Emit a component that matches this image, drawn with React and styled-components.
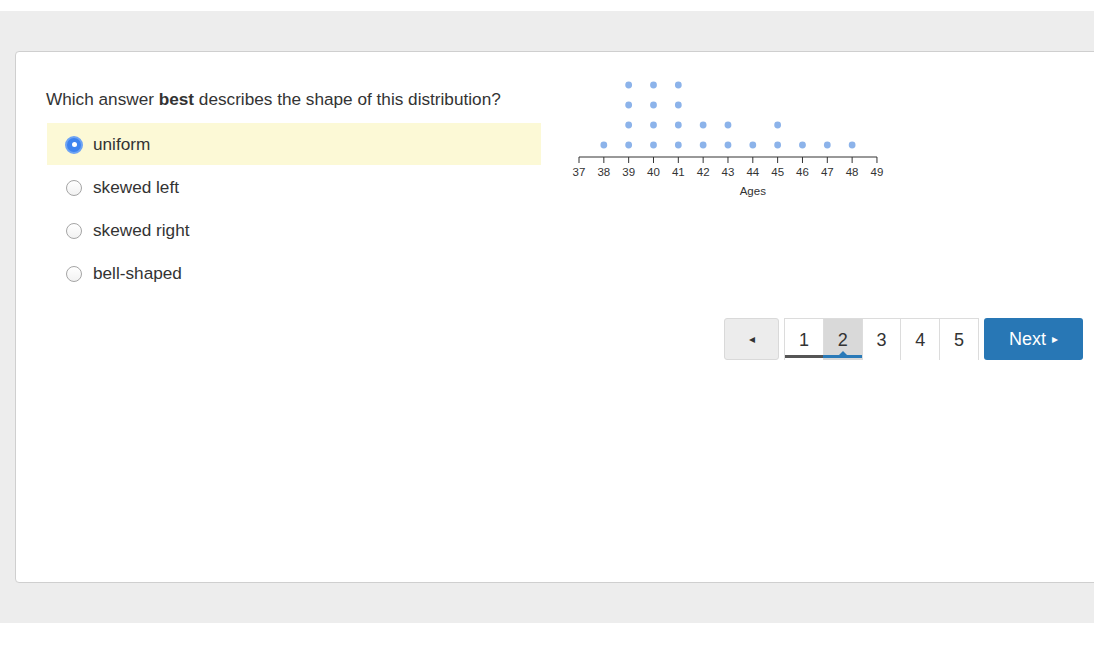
import React from 'react';
import styled, { createGlobalStyle } from 'styled-components';

const GlobalStyle = createGlobalStyle`
  body {
    margin: 0;
    background: #fff;
    font-family: "Liberation Sans", Arial, sans-serif;
    color: #333;
  }
`;

const options = ['uniform', 'skewed left', 'skewed right', 'bell-shaped'];
const counts = { 38: 1, 39: 4, 40: 4, 41: 4, 42: 2, 43: 2, 44: 1, 45: 2, 46: 1, 47: 1, 48: 1 };
const ages = [37, 38, 39, 40, 41, 42, 43, 44, 45, 46, 47, 48, 49];

const X0 = 14;
const STEP = 24.83;
const AXIS_Y = 87;

const DotPlot = () => (
  <Chart width="330" height="140" viewBox="0 0 330 140">
    {Object.entries(counts).map(([age, n]) =>
      Array.from({ length: n }).map((_, i) => (
        <circle
          key={`${age}-${i}`}
          cx={X0 + (age - 37) * STEP}
          cy={75 - i * 20}
          r="3.4"
          fill="#8cb3ea"
        />
      ))
    )}
    <line x1={X0} x2={X0 + 12 * STEP} y1={AXIS_Y} y2={AXIS_Y} stroke="#333" strokeWidth="1" />
    {ages.map((a, i) => (
      <g key={a}>
        <line x1={X0 + i * STEP} x2={X0 + i * STEP} y1={AXIS_Y} y2={AXIS_Y + 6} stroke="#333" strokeWidth="1" />
        <TickLabel x={X0 + i * STEP} y={AXIS_Y + 19} textAnchor="middle">{a}</TickLabel>
      </g>
    ))}
    <TickLabel x={X0 + 7 * STEP} y={AXIS_Y + 38} textAnchor="middle">Ages</TickLabel>
  </Chart>
);

const App = () => (
  <>
    <GlobalStyle />
    <Page>
      <Band>
        <Card>
          <Body>
            <Left>
              <Question>
                Which answer <b>best</b> describes the shape of this distribution?
              </Question>
              <OptionList>
                {options.map((o, i) => (
                  <Option key={o} selected={i === 0}>
                    <Radio selected={i === 0} />
                    {o}
                  </Option>
                ))}
              </OptionList>
            </Left>
            <DotPlot />
          </Body>
          <Pager>
            <PrevButton>◂</PrevButton>
            <PageGroup>
              {[1, 2, 3, 4, 5].map((p) => (
                <PageItem key={p} current={p === 2} done={p === 1}>
                  {p}
                </PageItem>
              ))}
            </PageGroup>
            <NextButton>
              Next <Arrow>▸</Arrow>
            </NextButton>
          </Pager>
        </Card>
      </Band>
    </Page>
  </>
);

const Page = styled.div`
  padding-top: 11px;
`;

const Band = styled.div`
  background: #ededed;
  padding: 40px 0 40px 15px;
  overflow: hidden;
`;

const Card = styled.div`
  box-sizing: border-box;
  width: 1110px;
  height: 532px;
  background: #fff;
  border: 1px solid #cfcfcf;
  border-radius: 4px;
  padding: 18px 0 0 30px;
`;

const Body = styled.div`
  display: flex;
`;

const Left = styled.div`
  width: 495px;
  padding-top: 19px;
`;

const Question = styled.div`
  font-size: 17.2px;
  line-height: 20px;
  color: #333;

  b {
    font-weight: bold;
  }
`;

const OptionList = styled.div`
  margin-top: 14px;
  display: flex;
  flex-direction: column;
  gap: 1px;
`;

const Option = styled.div`
  height: 42px;
  display: flex;
  align-items: center;
  gap: 11px;
  padding-left: 19px;
  padding-top: 1px;
  box-sizing: border-box;
  margin-left: 1px;
  font-size: 17.2px;
  color: #333;
  background: ${(p) => (p.selected ? '#fcf9d6' : 'transparent')};
`;

const Radio = styled.span`
  box-sizing: border-box;
  width: ${(p) => (p.selected ? '18px' : '16px')};
  height: ${(p) => (p.selected ? '18px' : '16px')};
  margin: ${(p) => (p.selected ? '0 -1px' : '0')};
  border-radius: 50%;
  position: relative;
  border: ${(p) => (p.selected ? '2px solid #6ea4f4' : '1px solid #a5a5a5')};
  background: ${(p) => (p.selected ? '#3d83ef' : 'linear-gradient(#fff, #f2f2f2)')};

  &::after {
    content: '';
    display: ${(p) => (p.selected ? 'block' : 'none')};
    position: absolute;
    left: 50%;
    top: 50%;
    width: 5px;
    height: 5px;
    margin: -2.5px 0 0 -2.5px;
    border-radius: 50%;
    background: #fff;
  }
`;

const Chart = styled.svg`
  display: block;
  margin-left: 24px;
`;

const TickLabel = styled.text`
  font-family: "Liberation Sans", Arial, sans-serif;
  font-size: 11.5px;
  fill: #333;
`;

const Pager = styled.div`
  display: flex;
  justify-content: flex-end;
  align-items: flex-start;
  gap: 5px;
  margin-top: 24px;
  padding-right: 41px;
`;

const PrevButton = styled.div`
  box-sizing: border-box;
  width: 55px;
  height: 42px;
  display: flex;
  align-items: center;
  justify-content: center;
  background: #ececec;
  border: 1px solid #d9d9d9;
  border-radius: 3px;
  font-size: 12px;
  color: #333;
`;

const PageGroup = styled.div`
  display: flex;
  width: 195px;
  box-sizing: border-box;
  border-top: 1px solid #dcdcdc;
  border-right: 1px solid #dcdcdc;
`;

const PageItem = styled.div`
  box-sizing: border-box;
  position: relative;
  flex: 1;
  height: 41px;
  display: flex;
  align-items: center;
  justify-content: center;
  border-left: 1px solid #dcdcdc;
  font-size: 18px;
  color: #333;
  padding-top: 1px;
  background: ${(p) => (p.current ? '#d9d9d9' : '#fff')};

  &::after {
    content: '';
    position: absolute;
    left: ${(p) => (p.done ? '0' : '-1px')};
    right: 0;
    bottom: 2px;
    height: 3px;
    background: ${(p) => (p.current ? '#2a7ab8' : p.done ? '#555' : 'transparent')};
  }

  &::before {
    content: '';
    display: ${(p) => (p.current ? 'block' : 'none')};
    position: absolute;
    left: 50%;
    bottom: 5px;
    margin-left: -4px;
    border-left: 4px solid transparent;
    border-right: 4px solid transparent;
    border-bottom: 4px solid #2a7ab8;
  }
`;

const NextButton = styled.div`
  box-sizing: border-box;
  width: 99px;
  height: 42px;
  display: flex;
  align-items: center;
  justify-content: center;
  gap: 6px;
  background: #2877b5;
  border-radius: 3px;
  color: #fff;
  font-size: 18px;
`;

const Arrow = styled.span`
  font-size: 12px;
`;

export default App;
